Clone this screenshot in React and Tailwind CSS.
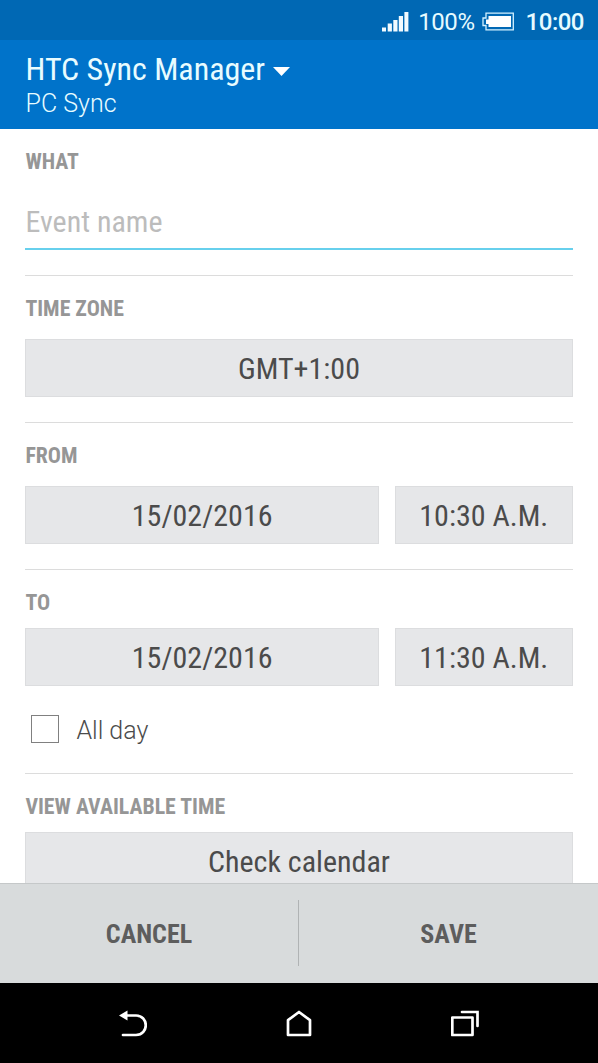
import React, { useState } from 'react';

function StatusBar() {
    return (
        <div className="h-10 shrink-0 bg-[#0068b4] flex items-center justify-end pr-3.5 text-white">
            <svg width="27" height="21" viewBox="0 0 27 21" fill="#f2fbff" className="mr-[9px] mt-0.5">
                <rect x="0" y="16.5" width="4" height="4" />
                <rect x="5.7" y="12.5" width="4.2" height="8" />
                <rect x="11.3" y="9" width="4.2" height="11.5" />
                <rect x="16.8" y="5" width="4.2" height="15.5" />
                <rect x="22.4" y="1" width="4" height="19.5" />
            </svg>
            <span className="text-[24px] leading-10 text-[#e6fbff] pt-1 tracking-[-0.4px]">100%</span>
            <svg width="33" height="19" viewBox="0 0 33 19" fill="none" className="ml-[7px] mr-[11px] mt-0.5">
                <path d="M4 1.2H31.3V17.8H4V13.5H1V6H4Z" stroke="#d3f1ff" strokeWidth="1.3" />
                <path d="M6.5 4H29V15H6.5V12H4V7.5H6.5Z" fill="#fff" />
            </svg>
            <span className="text-[24px] leading-10 font-medium text-[#e6fbff] pt-1 tracking-[-0.5px]">10:00</span>
        </div>
    );
}

function Header() {
    return (
        <header className="h-[89px] shrink-0 bg-[#0073ca] px-[25.5px] pt-[11px] text-[#e8fcff]">
            <div className="flex items-center">
                <h1 className="text-[32px] leading-9 [font-stretch:75%]">HTC Sync Manager</h1>
                <svg width="17" height="9" viewBox="0 0 17 9" fill="#fff" className="ml-[7.5px] mt-1">
                    <path d="M0 0H17L8.5 9Z" />
                </svg>
            </div>
            <p className="text-[25px] leading-8 font-light mt-px">PC Sync</p>
        </header>
    );
}

function Label({ children }) {
    return <h2 className="text-[21.8px] leading-6 font-bold text-[#969696] [font-stretch:75%]">{children}</h2>;
}

function Field({ children, className }) {
    return (
        <button className={`h-[58px] bg-[#e6e7e9] border border-[#dcdddf] text-[30px] text-[#4b4b4b] [font-stretch:75%] ${className}`}>
            {children}
        </button>
    );
}

function NavBar() {
    return (
        <nav className="h-20 shrink-0 bg-black flex items-center justify-center gap-[138px]">
            <svg width="28" height="28" viewBox="0 0 28 28" fill="none" stroke="#fff" strokeWidth="2.7" strokeLinecap="round">
                <path d="M7 6.5H17C30 6.5 30 26 17 26H4" />
                <path d="M0 6.5L8.5 1.5V11.5Z" fill="#fff" stroke="none" />
            </svg>
            <svg width="28" height="28" viewBox="0 0 28 28" fill="none" stroke="#fff" strokeWidth="2.7" strokeLinejoin="round">
                <path d="M3 11.2L14 3L25 11.2V26H3Z" />
            </svg>
            <svg width="28" height="28" viewBox="0 0 28 28" fill="none" stroke="#fff" strokeWidth="2.7" strokeLinecap="round" strokeLinejoin="round">
                <rect x="1.3" y="8.5" width="20.2" height="17.5" />
                <path d="M11 3H26.5V17" strokeLinejoin="miter" />
            </svg>
        </nav>
    );
}

export default function App() {
    const [nome, setNome] = useState('');
    const [allDay, setAllDay] = useState(false);

    return (
        <div className="w-[598px] h-[1063px] overflow-hidden bg-white flex flex-col font-['Roboto',sans-serif]">
            <StatusBar />
            <Header />
            <main className="flex-1 min-h-0 overflow-hidden px-[25.4px]">
                <section className="h-[147px] pt-[21px] border-b border-[#dcdcdc]">
                    <Label>WHAT</Label>
                    <input
                        type="text"
                        placeholder="Event name"
                        value={nome}
                        onChange={e => setNome(e.target.value)}
                        className="block w-full h-[54px] pb-0.5 mt-[22px] border-b-2 border-[#67d0ed] outline-none text-[30px] text-[#4b4b4b] placeholder-[#bcbcbc] [font-stretch:75%]"
                    />
                </section>
                <section className="h-[147px] pt-[21px] border-b border-[#dcdcdc]">
                    <Label>TIME ZONE</Label>
                    <Field className="w-full mt-[18px]">GMT+1:00</Field>
                </section>
                <section className="h-[147px] pt-[21px] border-b border-[#dcdcdc]">
                    <Label>FROM</Label>
                    <div className="flex gap-4 mt-[18px]">
                        <Field className="w-[353.5px]">15/02/2016</Field>
                        <Field className="flex-1">10:30 A.M.</Field>
                    </div>
                </section>
                <section className="h-[204px] pt-[21px] border-b border-[#dcdcdc]">
                    <Label>TO</Label>
                    <div className="flex gap-4 mt-[13px]">
                        <Field className="w-[353.5px]">15/02/2016</Field>
                        <Field className="flex-1">11:30 A.M.</Field>
                    </div>
                    <label className="flex items-start mt-[29px] pl-[5.5px]">
                        <input
                            type="checkbox"
                            checked={allDay}
                            onChange={e => setAllDay(e.target.checked)}
                            className="appearance-none size-7 border border-[#808080] checked:bg-[#0073ca]"
                        />
                        <span className="ml-[17.5px] text-[25px] leading-8 font-light text-[#4b4b4b]">All day</span>
                    </label>
                </section>
                <section className="pt-[21px]">
                    <Label>VIEW AVAILABLE TIME</Label>
                    <Field className="w-full mt-[13px]">Check calendar</Field>
                </section>
            </main>
            <footer className="h-[100px] shrink-0 bg-[#d8dbdc] border-t border-[#c5c8c9] flex items-center text-[26px] text-[#5d5d5d] font-bold [font-stretch:75%]">
                <button className="w-[298px] pt-0.5">CANCEL</button>
                <div className="w-px h-[66px] mb-0.5 bg-[#b0b3b4]" />
                <button className="flex-1 pt-0.5">SAVE</button>
            </footer>
            <NavBar />
        </div>
    );
}
